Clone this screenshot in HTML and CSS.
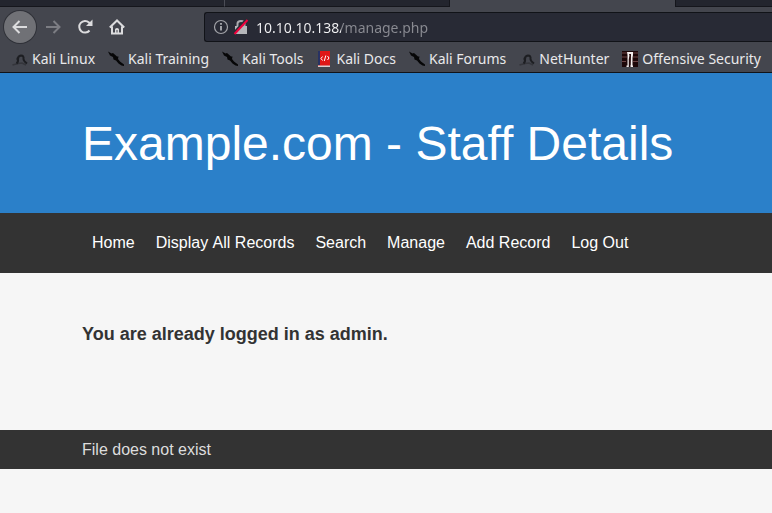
FILE: index.html
```html
<!DOCTYPE html>
<html lang="en">
<head>
<meta charset="utf-8">
<title>Example.com - Staff Details</title>
<link rel="stylesheet" href="styles.css">
</head>
<body>
<svg class="sprites" aria-hidden="true">
  <symbol id="dragon" viewBox="0 0 16 16">
    <path d="M0.500 14L6 12.500L10 12L14 14" fill="none" stroke="#34353b" stroke-width="1.500"/>
    <path d="M4.500 12.500Q6.500 11 6 8Q5.800 5 9 4.500Q12 4.500 11.500 8Q11.500 10 15 12.500M6.500 6Q5 7 5.500 9" fill="none" stroke="#1d1e22" stroke-width="2"/>
  </symbol>
  <symbol id="blade" viewBox="0 0 16 16">
    <path d="M0 0.500L3.500 2.500L5 2L9 5.500L10.500 5.500L10 8L12 10.500L16 13.500V15L13.500 14.500L10.500 12.500L8 9.500L5.500 8.500L5 6L2 4.500Z" fill="#060607"/>
  </symbol>
</svg>
<header class="browser">
  <div class="tabs"><span class="tab"></span><span class="tab"></span><span class="tab active"></span><span class="rest"></span></div>
  <div class="toolbar">
    <button class="tool back" aria-label="Back"><svg viewBox="0 0 16 16"><path d="M15 8H1.500M7.500 2L1.500 8L7.500 14"/></svg></button>
    <button class="tool forward" aria-label="Forward" disabled><svg viewBox="0 0 16 16"><path d="M1 8H14.500M8.500 2L14.500 8L8.500 14"/></svg></button>
    <button class="tool" aria-label="Reload"><svg viewBox="0 0 16 16"><path d="M12.500 11.500A5.800 5.800 0 1 1 12 3.500L13.500 5"/><path class="solid" d="M15.500 0.500V7H9Z"/></svg></button>
    <button class="tool" aria-label="Home"><svg viewBox="0 0 16 16"><path d="M0.800 8.500L8 1.500L15.200 8.500M3 7.500V14.500H13V7.500"/><path class="solid" d="M6 14V10.500Q6 9 8 9Q10 9 10 10.500V14H8.500V11H7.500V14Z"/></svg></button>
    <div class="address">
      <svg viewBox="0 0 16 16" aria-hidden="true"><circle cx="8" cy="8" r="6.500" fill="none" stroke="#a3a4a9" stroke-width="1.200"/><path d="M8 7V11.500M8 4V5.700" stroke="#b5b6ba" stroke-width="1.700"/></svg>
      <svg viewBox="0 0 16 16" aria-hidden="true"><path d="M4.500 8V4.500Q4.500 2 8 2Q11.500 2 11.500 4.500V8" fill="none" stroke="#a9aaaf" stroke-width="2"/><path d="M2 7H14V15H2Z" fill="#b5b6ba"/><path d="M0.500 14L13 0.500" stroke="#282a35" stroke-width="2"/><path d="M1.500 15L14.500 1" stroke="#f0003c" stroke-width="2"/></svg>
      <input class="url" type="text" aria-label="Address" value="10.10.10.138/manage.php">
    </div>
  </div>
  <nav class="bookmarks" aria-label="Bookmarks">
    <a href="#"><svg><use href="#dragon"/></svg>Kali Linux</a>
    <a href="#"><svg><use href="#blade"/></svg>Kali Training</a>
    <a href="#"><svg><use href="#blade"/></svg>Kali Tools</a>
    <a href="#"><svg viewBox="0 0 16 16"><path d="M2 0H14V16H2Z" fill="#df1717"/><path d="M2 0H4V14H2Z" fill="#283263"/><path d="M2 14.500H14V16H2Z" fill="#d8cfd0"/><path d="M6.500 5.500L5 7.500L6.500 9.500M11.500 5L13 7L11.500 9M9.800 4.500L8.300 10" fill="none" stroke="#fff"/></svg>Kali Docs</a>
    <a href="#"><svg><use href="#blade"/></svg>Kali Forums</a>
    <a href="#"><svg><use href="#dragon"/></svg>NetHunter</a>
    <a href="#"><svg viewBox="0 0 16 16"><path d="M0 0H16V16H0Z" fill="#1c0709"/><path d="M0 2H5M11 2H16M0 6H5M11 6H16M0 10.500H4M11 10.500H16" stroke="#6c4445" stroke-width="1.200"/><path d="M5 1H11V4L10.500 7V14.500H11V16H8.500V6L7.500 5L6.800 8V16H4.500V14.500H5.500V4Z" fill="#f3eeee"/><path d="M7 3H9V5L8.500 14H7.500V5Z" fill="#2b1012"/></svg>Offensive Security</a>
  </nav>
</header>
<div class="banner"><h1>Example.com - Staff Details</h1></div>
<nav class="menu" aria-label="Main">
  <a href="#">Home</a>
  <a href="#">Display All Records</a>
  <a href="#">Search</a>
  <a href="#">Manage</a>
  <a href="#">Add Record</a>
  <a href="#">Log Out</a>
</nav>
<main><h2>You are already logged in as admin.</h2></main>
<footer>File does not exist</footer>
</body>
</html>
```
FILE: styles.css
```css
* { box-sizing: border-box; }
body {
  margin: 0;
  background: #f6f6f6;
  color: #333;
  font: 16px/20px "Liberation Sans", Arial, sans-serif;
}
a { text-decoration: none; }
.sprites { display: none; }

.browser {
  background: #44464e;
  border-bottom: 1px solid #111318;
  font-family: "Noto Sans", sans-serif;
}
.tabs { display: flex; height: 7px; }
.tab { flex: 0 0 225px; background: #23252e; border-right: 1px solid #4b4d56; border-bottom: 1px solid #15161c; }
.tab.active { background: #44464e; border-color: #44464e; }
.tab:nth-child(2) { border-right-color: #15161c; }
.rest { flex: 1; background: #23252e; border-left: 1px solid #15161c; border-bottom: 1px solid #15161c; }

.toolbar { display: flex; align-items: center; height: 39px; padding-left: 4px; }
.tool {
  display: grid;
  place-items: center;
  width: 32px;
  height: 32px;
  padding: 0;
  border: 0;
  border-radius: 50%;
  background: none;
}
.tool svg { width: 16px; height: 16px; fill: none; stroke: #dcdcde; stroke-width: 2; }
.tool .solid { fill: #dcdcde; stroke: none; }
.back { margin-right: 1px; background: #707176; box-shadow: 0 0 0 1px #2f3138; }
.forward svg { stroke: #7c7d83; }
.address {
  display: flex;
  flex: 1;
  align-items: center;
  gap: 4px;
  height: 30px;
  margin-left: 71px;
  padding-left: 8px;
  border: 1px solid #111318;
  border-right: 0;
  border-radius: 3px 0 0 3px;
  background: #282a35;
}
.address svg { flex: none; width: 16px; height: 16px; }
.url {
  flex: 1;
  min-width: 0;
  height: 26px;
  margin-left: 3px;
  padding: 2px 0 0;
  border: 0;
  outline: 0;
  font: 14px/24px "Noto Sans", sans-serif;
  background: linear-gradient(90deg, #f4f4f6 85px, #8a8b92 85px);
  -webkit-background-clip: text;
  background-clip: text;
  -webkit-text-fill-color: transparent;
}
.bookmarks { display: flex; gap: 13px; height: 26px; padding-left: 12px; overflow: hidden; }
.bookmarks a { display: flex; flex: none; align-items: center; gap: 4px; color: #e9e9eb; font-size: 14px; white-space: nowrap; }
.bookmarks svg { width: 16px; height: 16px; }

.banner { padding: 41px 82px 39px; background: #2b80c9; color: #fff; }
h1 { margin: 0; font-size: 48px; font-weight: 400; line-height: 60px; white-space: nowrap; }
.menu { display: flex; gap: 1px; padding: 20px 82px; background: #333; font-kerning: none; }
.menu a { padding: 0 10px; color: #fff; white-space: nowrap; }
main { padding: 51px 82px 86px; }
h2 { margin: 0; font-size: 18px; line-height: 20px; }
footer { padding: 10px 82px 9px; background: #333; color: #ddd; }
```
